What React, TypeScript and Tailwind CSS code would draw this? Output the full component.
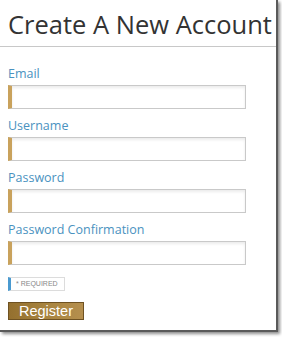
export default function App() {
  const fields = ["Email", "Username", "Password", "Password Confirmation"];

  return (
    <div className="w-[282px] h-[337px] bg-white relative overflow-hidden">
      {/* window frame with shadow on right and bottom */}
      <div className="w-[278px] h-[332px] border-r-2 border-b-2 border-[#5a5a5a] shadow-[2px_2px_3px_rgba(0,0,0,0.45)] bg-white">
        <h1
          className="pl-2 pt-[9px] h-[47px] text-[25.5px] leading-[30px] text-[#333333] border-b border-[#c8c8c8]"
          style={{ fontFamily: '"Open Sans", sans-serif' }}
        >
          Create A New Account
        </h1>

        <form className="pl-2 pt-[18px] flex flex-col items-start" style={{ fontFamily: '"Open Sans", sans-serif' }}>
          {fields.map((f) => (
            <div key={f} className="mb-[8px]">
              <label className="block text-[12.5px] leading-[17px] text-[#4a92c0] mb-[3px]">{f}</label>
              <input
                type="text"
                className="block w-[238px] h-[24px] border border-[#c9c9c9] border-l-4 border-l-[#c9a25c] bg-white shadow-[inset_0_2px_3px_rgba(0,0,0,0.08)] outline-none"
              />
            </div>
          ))}

          <div
            className="mt-[4px] w-[57px] h-[14px] border border-[#dcdcdc] border-l-[3px] border-l-[#4a9ad0] flex items-center pl-[5px] text-[7px] text-[#888]"
            style={{ fontFamily: '"Liberation Sans", sans-serif' }}
          >
            * REQUIRED
          </div>

          <button
            type="button"
            className="mt-[11px] w-[76px] h-[18px] border border-[#6f5222] bg-gradient-to-r from-[#94702f] via-[#a8843f] to-[#b58f4e] text-white text-[14.5px] leading-[16px] flex items-center justify-center"
            style={{ fontFamily: '"Liberation Sans", sans-serif' }}
          >
            Register
          </button>
        </form>
      </div>
    </div>
  );
}
